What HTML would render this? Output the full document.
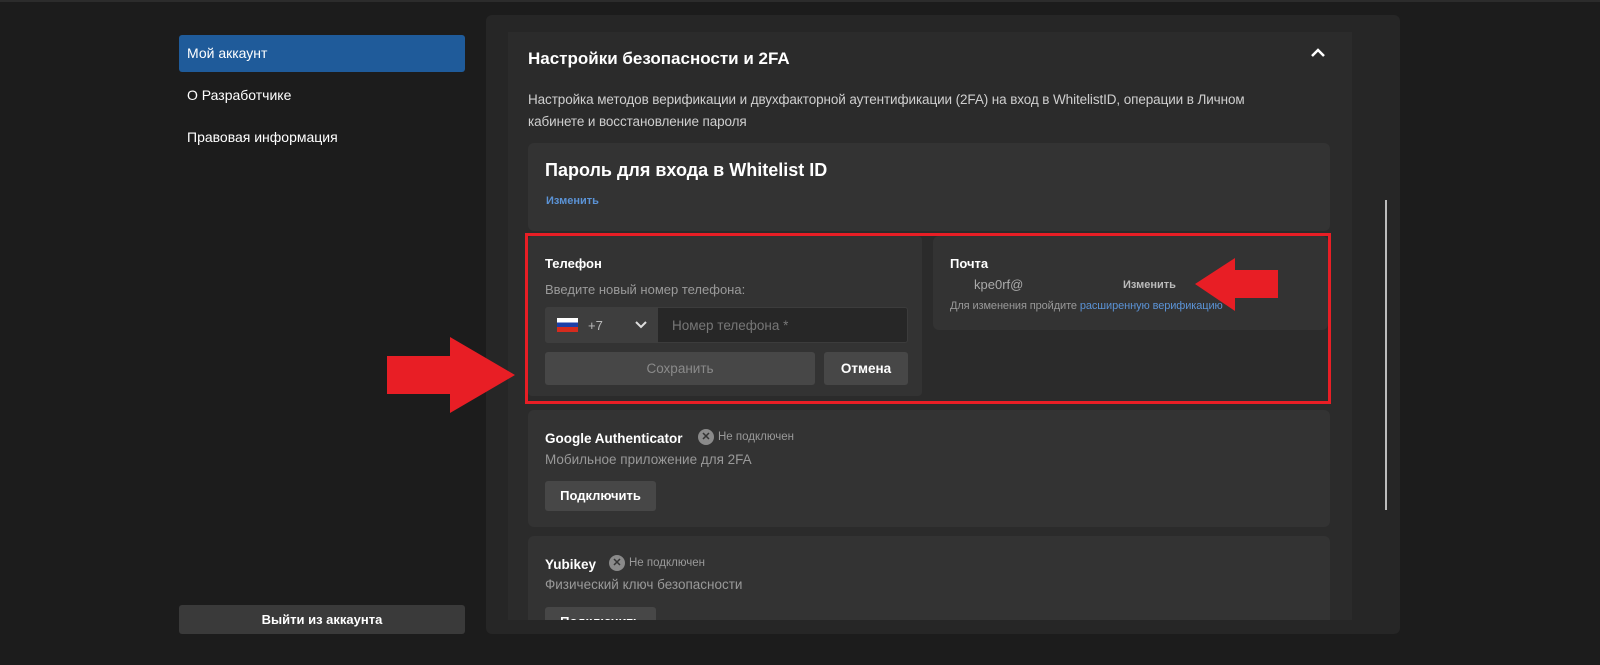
<!DOCTYPE html>
<html><head><meta charset="utf-8"><style>
*{margin:0;padding:0;box-sizing:border-box}
body{width:1600px;height:665px;background:#1c1c1c;font-family:"Liberation Sans",sans-serif;position:relative;overflow:hidden;color:#fff}
.a{position:absolute}
.t{white-space:nowrap}
</style></head><body>
<div class="a" style="left:0;top:0;width:1600px;height:2px;background:#2c2c2c"></div>
<div class="a" style="left:179px;top:35px;width:286px;height:37px;background:#1f5b9a;border-radius:3px"></div>
<div class="a t" style="left:187px;top:45px;font-size:14px">Мой аккаунт</div>
<div class="a t" style="left:187px;top:87px;font-size:14px">О Разработчике</div>
<div class="a t" style="left:187px;top:129px;font-size:14px">Правовая информация</div>
<div class="a" style="left:179px;top:605px;width:286px;height:29px;background:#3a3a3a;border-radius:3px"></div>
<div class="a t" style="left:179px;top:612px;width:286px;text-align:center;font-size:13px;font-weight:bold">Выйти из аккаунта</div>

<div class="a" style="left:486px;top:15px;width:914px;height:619px;background:#262626;border-radius:6px"></div>
<div class="a" style="left:508px;top:32px;width:844px;height:588px;background:#2b2b2b"></div>
<div class="a" style="left:1385px;top:200px;width:2px;height:310px;background:#bbb"></div>
<div class="a t" style="left:528px;top:49px;font-size:17px;font-weight:bold">Настройки безопасности и 2FA</div>
<svg class="a" style="left:1310px;top:47px" width="16" height="12"><path d="M2 9 L8 3 L14 9" stroke="#fff" stroke-width="2.5" fill="none"/></svg>
<div class="a" style="left:528px;top:89px;width:790px;font-size:13.5px;line-height:22px;color:#cfcfcf;letter-spacing:-0.1px">Настройка методов верификации и двухфакторной аутентификации (2FA) на вход в WhitelistID, операции в Личном<br>кабинете и восстановление пароля</div>

<div class="a" style="left:528px;top:143px;width:802px;height:88px;background:#333;border-radius:6px"></div>
<div class="a t" style="left:545px;top:160px;font-size:18px;font-weight:bold">Пароль для входа в Whitelist ID</div>
<div class="a t" style="left:546px;top:195px;font-size:11px;font-weight:bold;color:#5b93d6">Изменить</div>

<div class="a" style="left:528px;top:236px;width:394px;height:160px;background:#333;border-radius:4px"></div>
<div class="a t" style="left:545px;top:256px;font-size:13px;font-weight:bold">Телефон</div>
<div class="a t" style="left:545px;top:282px;font-size:13px;color:#9a9a9a">Введите новый номер телефона:</div>
<div class="a" style="left:545px;top:307px;width:363px;height:36px;background:#272727;border:1px solid #3c3c3c;border-radius:3px"></div>
<div class="a" style="left:545px;top:307px;width:113px;height:36px;background:#3e3e3e;border-radius:3px 0 0 3px"></div>
<div class="a" style="left:557px;top:318px;width:21px;height:14px;background:linear-gradient(#fff 33%,#1c3fa8 33%,#1c3fa8 66%,#d52b1e 66%)"></div>
<div class="a t" style="left:588px;top:318px;font-size:13px;color:#bbb">+7</div>
<svg class="a" style="left:634px;top:320px" width="14" height="10"><path d="M2 2 L7 7 L12 2" stroke="#ddd" stroke-width="2" fill="none"/></svg>
<div class="a t" style="left:672px;top:318px;font-size:13.5px;color:#777">Номер телефона *</div>
<div class="a" style="left:545px;top:352px;width:270px;height:33px;background:#474747;border-radius:3px"></div>
<div class="a t" style="left:545px;top:361px;width:270px;text-align:center;font-size:13.5px;color:#8a8a8a">Сохранить</div>
<div class="a" style="left:824px;top:352px;width:84px;height:33px;background:#474747;border-radius:3px"></div>
<div class="a t" style="left:824px;top:361px;width:84px;text-align:center;font-size:13.5px;font-weight:bold">Отмена</div>

<div class="a" style="left:933px;top:236px;width:395px;height:94px;background:#333;border-radius:6px"></div>
<div class="a t" style="left:950px;top:256px;font-size:13px;font-weight:bold">Почта</div>
<div class="a t" style="left:974px;top:277px;font-size:13px;color:#aaa">kpe0rf@</div>
<div class="a t" style="left:1123px;top:279px;font-size:11px;font-weight:bold;color:#bbb">Изменить</div>
<div class="a t" style="left:950px;top:300px;font-size:11px;color:#999;letter-spacing:-0.1px">Для изменения пройдите <span style="color:#5b93d6">расширенную верификацию</span></div>

<div class="a" style="left:525px;top:233px;width:806px;height:171px;border:3px solid #e81e25"></div>

<div class="a" style="left:528px;top:410px;width:802px;height:117px;background:#333;border-radius:6px"></div>
<div class="a t" style="left:545px;top:431px;font-size:13.5px;font-weight:bold">Google Authenticator</div>
<div class="a" style="left:698px;top:429px;width:16px;height:16px;border-radius:50%;background:#8a8a8a;color:#333;font-size:11px;text-align:center;line-height:16px;font-weight:bold">✕</div>
<div class="a t" style="left:718px;top:431px;font-size:11.5px;color:#999">Не подключен</div>
<div class="a t" style="left:545px;top:452px;font-size:13.5px;color:#999">Мобильное приложение для 2FA</div>
<div class="a" style="left:545px;top:481px;width:111px;height:30px;background:#474747;border-radius:3px"></div>
<div class="a t" style="left:545px;top:488px;width:111px;text-align:center;font-size:13px;font-weight:bold">Подключить</div>

<div class="a" style="left:528px;top:536px;width:802px;height:84px;background:#333;border-radius:6px 6px 0 0"></div>
<div class="a t" style="left:545px;top:557px;font-size:13.5px;font-weight:bold">Yubikey</div>
<div class="a" style="left:609px;top:555px;width:16px;height:16px;border-radius:50%;background:#8a8a8a;color:#333;font-size:11px;text-align:center;line-height:16px;font-weight:bold">✕</div>
<div class="a t" style="left:629px;top:557px;font-size:11.5px;color:#999">Не подключен</div>
<div class="a t" style="left:545px;top:577px;font-size:13.5px;color:#999">Физический ключ безопасности</div>
<div class="a" style="left:545px;top:607px;width:111px;height:13px;background:#474747;border-radius:3px 3px 0 0;overflow:hidden"><div class="t" style="padding-top:7px;text-align:center;font-size:13px;font-weight:bold">Подключить</div></div>

<svg class="a" style="left:0;top:0" width="1600" height="665">
<polygon points="387,356 450,356 450,337 515,375 450,413 450,394 387,394" fill="#e81e25"/>
<polygon points="1278,270 1235,270 1235,258 1195,284 1235,311 1235,298 1278,298" fill="#e81e25"/>
</svg>
</body></html>
